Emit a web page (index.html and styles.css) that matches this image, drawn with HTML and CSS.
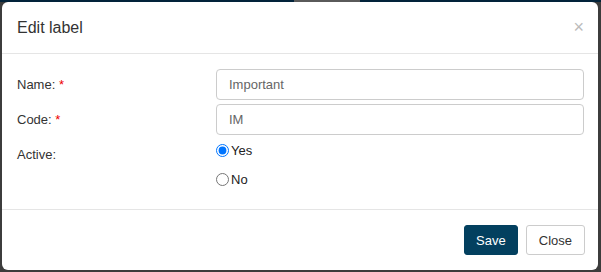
FILE: index.html
```html
<!DOCTYPE html>
<html lang="en">
<head>
  <meta charset="UTF-8">
  <title>Edit label</title>
  <link rel="stylesheet" href="styles.css">
</head>
<body>
  <div class="backdrop">
    <div class="modal">
      <div class="modal-header">
        <h4 class="modal-title">Edit label</h4>
        <span class="modal-close">&times;</span>
      </div>
      <div class="modal-body">
        <div class="form-row">
          <label>Name: <span class="req">*</span></label>
          <input type="text" class="form-control" value="Important">
        </div>
        <div class="form-row">
          <label>Code: <span class="req">*</span></label>
          <input type="text" class="form-control" value="IM">
        </div>
        <div class="form-row radio-group">
          <label>Active:</label>
          <div class="radios">
            <label class="radio"><input type="radio" name="active" checked>Yes</label>
            <label class="radio"><input type="radio" name="active">No</label>
          </div>
        </div>
      </div>
      <div class="modal-footer">
        <button class="btn btn-primary">Save</button>
        <button class="btn btn-default">Close</button>
      </div>
    </div>
  </div>
</body>
</html>
```

FILE: styles.css
```css
html, body {
  margin: 0;
  padding: 0;
}
body {
  font-family: "Liberation Sans", Arial, sans-serif;
  color: #333;
  background: #4a4a4a;
}
.backdrop {
  height: 272px;
  padding: 2px 3px 2px 2px;
  box-sizing: border-box;
  background: linear-gradient(to right, #02233a 0, #02233a 294px, #5a5a5a 294px, #5a5a5a 360px, #02233a 360px);
  background-size: 100% 2px;
  background-repeat: no-repeat;
  background-color: #3c3c3c;
}
.modal {
  background: #fff;
  border-radius: 6px;
  height: 268px;
  display: flex;
  flex-direction: column;
}
.modal-header {
  display: flex;
  justify-content: space-between;
  align-items: center;
  height: 51px;
  padding: 0 15px;
  border-bottom: 1px solid #e5e5e5;
}
.modal-title {
  margin: 0;
  font-size: 16px;
  font-weight: normal;
  color: #333;
}
.modal-close {
  font-size: 18px;
  color: #bbb;
  margin-right: -1px;
}
.modal-body {
  flex: 1;
  padding: 15px 14px 0 15px;
}
.form-row {
  display: grid;
  grid-template-columns: 199px 1fr;
  align-items: center;
  margin-bottom: 4px;
}
.form-row > label {
  font-size: 13px;
  color: #333;
}
.req {
  color: #e00;
}
.form-control {
  height: 31px;
  box-sizing: border-box;
  border: 1px solid #ccc;
  border-radius: 4px;
  padding: 0 12px;
  font-family: inherit;
  font-size: 13px;
  color: #666;
}
.radio-group {
  align-items: start;
  margin-top: 8px;
}
.radio-group > label {
  padding-top: 4px;
}
.radios {
  display: flex;
  flex-direction: column;
  gap: 14px;
}
.radio {
  display: flex;
  align-items: center;
  font-size: 13px;
  color: #222;
  height: 15px;
}
.radio input {
  margin: 0 2px 0 0;
  width: 13px;
  height: 13px;
}
.modal-footer {
  display: flex;
  justify-content: flex-end;
  gap: 8px;
  padding: 15px 13px 15px 15px;
  border-top: 1px solid #e5e5e5;
}
.btn {
  height: 30px;
  padding: 0 11px;
  font-family: inherit;
  font-size: 13px;
  border-radius: 3px;
  cursor: pointer;
}
.btn-primary {
  background: #03405f;
  color: #fff;
  border: 1px solid #03405f;
}
.btn-default {
  background: #fff;
  color: #333;
  border: 1px solid #ccc;
  padding: 0 12px;
}
```
